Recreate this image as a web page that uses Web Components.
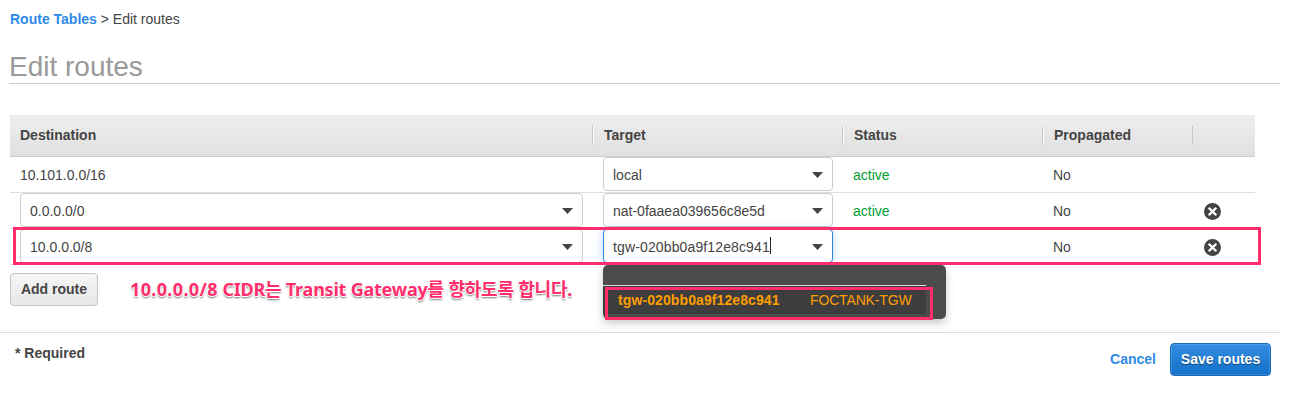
<!DOCTYPE html>
<html lang="ko">
<head>
<meta charset="utf-8">
<title>Edit routes</title>
<style>
html,body{margin:0;background:#fff;height:400px;overflow:hidden}
body{font:14px/20px "Liberation Sans",Arial,sans-serif;color:#444}
</style>
</head>
<body>
<edit-routes-page></edit-routes-page>
<script>
const define = (name, css, html) => customElements.define(name, class extends HTMLElement {
  constructor() {
    super();
    this.attachShadow({mode: 'open'}).innerHTML = `<style>*{box-sizing:border-box}:host{box-sizing:border-box}${css}</style>${html}`;
  }
});

define('route-select', `
:host{display:flex;align-items:center;height:34px;border:1px solid #ccc;border-radius:4px;background:#fff;padding:0 9px 0 9px}
:host([focused]){border-color:#2f86dd;box-shadow:0 0 8px rgba(50,140,230,.35)}
.v{flex:1;white-space:nowrap;display:flex;align-items:center;padding-top:2px}
:host([focused]) .v{letter-spacing:.13px}
:host([focused]) .v::after{content:"";width:1px;height:17px;background:#222;margin-top:-3px}
svg{display:block;width:11px;height:6px;margin-top:1px}`,
`<span class="v"><slot></slot></span><svg viewBox="0 0 11 6"><path d="M0 0h11L5.5 6z" fill="#444"/></svg>`);

define('remove-icon', `:host{display:block;width:17px;height:17px}svg{display:block}`,
`<svg width="17" height="17" viewBox="0 0 17 17"><circle cx="8.5" cy="8.5" r="8.5" fill="#444"/><path d="M4.7 4.7l7.6 7.6M12.3 4.7l-7.6 7.6" stroke="#fff" stroke-width="2.3"/></svg>`);

define('route-row', `
:host{display:grid;grid-template-columns:583px 250px 200px 149px 63px;height:36px;border-bottom:1px solid #ddd;align-items:start}
div{padding:0 10px;height:34px}
.d,.t,.s,.p{display:flex;align-items:center}
::slotted(route-select){width:100%}
::slotted(span){padding-top:2px}
.s{color:#00a033}
.x{padding:10px 0 0 12px}`,
`<div class="d"><slot name="destination"></slot></div><div class="t"><slot name="target"></slot></div><div class="s"><slot name="status"></slot></div><div class="p"><slot name="propagated"></slot></div><div class="x"><slot name="action"></slot></div>`);

define('route-head', `
:host{display:grid;grid-template-columns:582px 250px 200px 150px 63px;height:42px;border-bottom:1px solid #ccc;background:linear-gradient(#eee,#e0e0e0);font-weight:bold;align-items:center}
div{height:19px;line-height:19px;padding-left:11px;border-left:1px solid #c8c8c8;box-shadow:inset 1px 0 #fafafa}
div:first-of-type{border-left:0;box-shadow:none;padding-left:10px}
div:last-of-type{box-shadow:none}`,
`<div><span>Destination</span></div><div><span>Target</span></div><div><span>Status</span></div><div><span>Propagated</span></div><div></div>`);

define('ui-button', `
:host{display:flex;align-items:center;justify-content:center;height:33px;border:1px solid #c4c4c4;border-radius:4px;background:linear-gradient(#f5f5f5,#e8e8e8);font-weight:bold;white-space:nowrap;padding-bottom:1px}
:host([primary]){border-color:#146cc0;background:linear-gradient(#338de2,#1370c8);color:#fff;text-shadow:0 1px 1px rgba(0,0,0,.45);box-shadow:inset 0 0 0 1px rgba(255,255,255,.14)}`,
`<slot></slot>`);

define('target-menu', `
:host{display:block;width:343px;height:54px;background:#4b4b4b;border-radius:5px;box-shadow:0 4px 8px rgba(0,0,0,.22);padding-top:20px;color:#ff9d00}
.o{width:323px;height:29px;border-top:1px solid #ddd;background:#3d3d3d;display:flex;padding-left:15px;line-height:29px;white-space:nowrap}
b{width:192px;letter-spacing:.1px}
.n{letter-spacing:-.15px}`,
`<div class="o"><b><slot name="id"></slot></b><span class="n"><slot name="label"></slot></span></div>`);

define('highlight-box', `:host{display:block;border:3px solid #ff2d6b;pointer-events:none}`, ``);

define('callout-note', `
:host{display:block;font:700 18px/28px "Noto Sans","Noto Sans CJK KR",sans-serif;color:#ff2d6b;white-space:nowrap;letter-spacing:-.22px;
text-shadow:1px 0 #fff,-1px 0 #fff,0 1px #fff,0 -1px #fff,0 2px 2px rgba(0,0,0,.55)}
::slotted(.cidr){letter-spacing:.35px}`,
`<slot></slot>`);

define('edit-routes-page', `
:host{display:block;width:1308px;height:400px}
.crumb{padding:9px 0 0 10px;height:47px}
.crumb b,.cancel{color:#2e8ae6;font-weight:bold}
h1{margin:0 0 0 9px;width:1271px;height:37px;border-bottom:1px solid #ccc;font-size:28px;line-height:39px;font-weight:normal;color:#999}
.table{position:relative;margin:31px 0 0 10px;width:1245px}
.table target-menu{position:absolute;left:593px;top:150px}
.rowbox{position:absolute;left:3px;top:112px;width:1248px;height:38px}
.optbox{position:absolute;left:595px;top:172px;width:328px;height:33px}
.add{display:flex;padding:8px 0 0 10px;height:67px}
.add ui-button{width:88px}
callout-note{margin:2px 0 0 32px}
footer{width:1280px;border-top:1px solid #ddd;display:flex;padding:10px 9px 0 15px;font-weight:bold}
.cancel{margin:6px 14px 0 auto}
footer ui-button{width:101px}`,
`<div class="crumb"><b>Route Tables</b> <span>&gt; Edit routes</span></div>
<h1><span>Edit routes</span></h1>
<div class="table">
<route-head></route-head>
<route-row><span slot="destination">10.101.0.0/16</span><route-select slot="target">local</route-select><span slot="status">active</span><span slot="propagated">No</span></route-row>
<route-row><route-select slot="destination">0.0.0.0/0</route-select><route-select slot="target">nat-0faaea039656c8e5d</route-select><span slot="status">active</span><span slot="propagated">No</span><remove-icon slot="action"></remove-icon></route-row>
<route-row><route-select slot="destination">10.0.0.0/8</route-select><route-select slot="target" focused>tgw-020bb0a9f12e8c941</route-select><span slot="propagated">No</span><remove-icon slot="action"></remove-icon></route-row>
<target-menu><span slot="id">tgw-020bb0a9f12e8c941</span><span slot="label">FOCTANK-TGW</span></target-menu>
<highlight-box class="rowbox"></highlight-box>
<highlight-box class="optbox"></highlight-box>
</div>
<div class="add"><ui-button>Add route</ui-button><callout-note><span class="cidr">10.0.0.0/8</span> CIDR는 Transit Gateway를 향하도록 합니다.</callout-note></div>
<footer><span>* Required</span><span class="cancel">Cancel</span><ui-button primary>Save routes</ui-button></footer>`);
</script>
</body>
</html>
